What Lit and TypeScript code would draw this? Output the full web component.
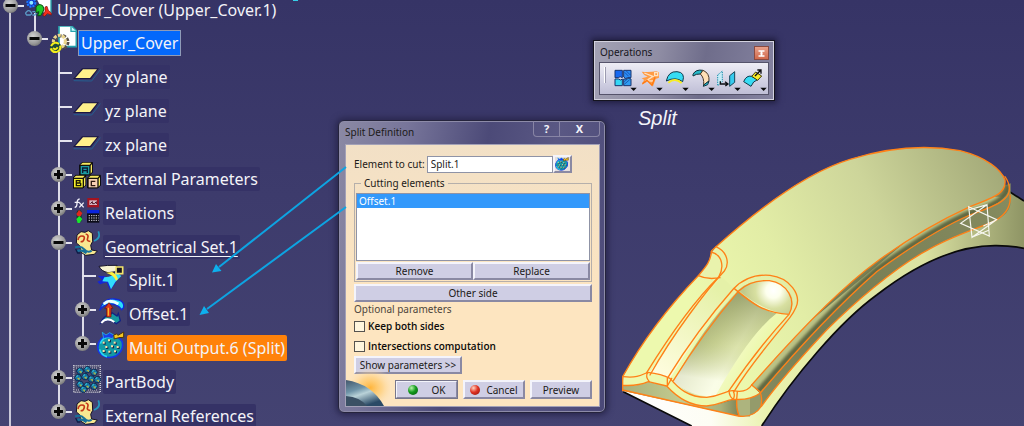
import { LitElement, html, css, svg, nothing, TemplateResult } from "lit";
import { customElement, property } from "lit/decorators.js";

const icon = (body: unknown, box = "0 0 84 84", cls = "glyph") =>
  html`<svg class=${cls} viewBox=${box} aria-hidden="true">${body}</svg>`;

/* ---- tree glyphs, drawn on an 84 x 84 grid ---- */
const productGlyph = icon(svg`
  <path d="M26 0h52v62H58" fill="#fff" stroke="#2aa7ad" stroke-width="4"/>
  <circle cx="19" cy="29" r="12" fill="#0a35c8" stroke="#1e7bff" stroke-width="6" stroke-dasharray="6 3"/>
  <circle cx="19" cy="29" r="6" fill="#8fe9ff"/>
  <path d="M5 56q6-6 12 0t-1 10H5q-6-5 0-10zM22 56h8q6 5 0 10h-8" fill="none" stroke="#5b9cc8" stroke-width="4"/>
  <path d="M33 42q8-12 20-4q8 10 0 20l-6 10h-9l4-12-9 3z" fill="#1fc728" stroke="#0a4f12" stroke-width="3"/>
  <path d="M60 42l6-2 4 12 9 8v6l-12-4-8 8-6-3 7-12z" fill="#f5301c" stroke="#7c0d0d" stroke-width="2"/>`);

const partGlyph = icon(svg`
  <path d="M30 0h38l14 14v48H30z" fill="#fff" stroke="#26a2ad" stroke-width="5"/>
  <path d="M66 2v14h16" fill="#c9fbff" stroke="#26a2ad" stroke-width="4"/>
  <circle cx="38" cy="48" r="19" fill="none" stroke="#595047" stroke-width="9" stroke-dasharray="9 4"/>
  <circle cx="31" cy="46" r="18" fill="none" stroke="#ead58a" stroke-width="9" stroke-dasharray="9 4"/>
  <circle cx="20" cy="64" r="17" fill="#1d4b3d"/>
  <path d="M6 60q10-16 24-6M5 67q6 15 20 10q12-5 8-18M12 66q8 8 14-2" fill="none" stroke="#f4ee1b" stroke-width="6"/>`);

const planeGlyph = icon(svg`
  <path d="M2 62l54 1 26-34" fill="none" stroke="#255f91" stroke-width="3"/>
  <path d="M0 57L27 25h51L54 57z" fill="#1a1741"/>
  <path d="M7 54L30 28h42L51 54z" fill="#fff08b"/>`);

const cube = (x: number, y: number, fill: string, letter: string) => svg`
  <path d="M${x} ${y + 8}l8-8h30v30l-8 8h-30z" fill="#15130c" stroke="#080808" stroke-width="3"/>
  <path d="M${x + 2} ${y + 7}l7-6h26l-5 6zM${x + 33} ${y + 10}l4-5v24l-4 5z" fill="#f6e85f"/>
  <rect x=${x + 3} y=${y + 11} width="26" height="25" fill=${fill}/>
  ${letter === "A" ? svg`<path d="M${x + 9} ${y + 32}v-15h14v15m-14-7h14" fill="none" stroke="#0c1b33" stroke-width="4"/>` : nothing}
  ${letter === "B" ? svg`<path d="M${x + 10} ${y + 16}h11v7h-11zh0v15h13v-8" fill="none" stroke="#1b1a05" stroke-width="4"/>` : nothing}
  ${letter === "C" ? svg`<path d="M${x + 23} ${y + 18}h-12v13h12" fill="none" stroke="#2c1811" stroke-width="4"/>` : nothing}`;

const paramsGlyph = icon(svg`${cube(20, 1, "#1b9aa2", "A")}${cube(0, 40, "#f4ee2a", "B")}${cube(44, 40, "#f9d1b4", "C")}`);

const relationsGlyph = icon(svg`
  <path d="M5 34q7 0 7-12t8-13M5 19h14M19 20l13 14M32 20L19 34" fill="none" stroke="#f1f0f8" stroke-width="4"/>
  <rect x="43" y="6" width="35" height="28" fill="#a31420"/>
  <path d="M49 13h23v14H49z" fill="#d8b9c5"/><path d="M52 23l6-6v6h6l6-6v7" fill="none" stroke="#4b1220" stroke-width="3"/>
  <rect x="11" y="43" width="15" height="36" rx="6" fill="#17372f"/>
  <path d="M10 54l8-12 10 9-5 10h-9z" fill="#e0261d"/><path d="M10 69l9-9 9 9-8 12h-6z" fill="#19e92c"/>
  <rect x="42" y="42" width="37" height="38" fill="#0b0b18"/><rect x="42" y="42" width="37" height="10" fill="#0a24dc"/>
  <path d="M47 59h30M47 66h30M47 73h30" stroke="#d8d6e3" stroke-width="3" stroke-dasharray="4 3"/>`);

const setGlyph = icon(svg`
  <path d="M12 15L24 5l12 2 10-5 12 8 1 24-6 12 3 14 17 3-9 10-26 3-14-9-4-20-10-8z" fill="#f8e891" stroke="#171327" stroke-width="3"/>
  <path d="M15 30q2-12 12-12t6 10-10 6M38 12q10 2 6 12t8 10" fill="none" stroke="#c43719" stroke-width="5"/>
  <path d="M6 52q18-6 28 6t22 4M12 64q14-8 28 6" fill="none" stroke="#17719a" stroke-width="6"/>
  <path d="M76 4q7 18-6 25l-7 4" fill="none" stroke="#249abf" stroke-width="5"/>
  <path d="M8 57l6 12h8" fill="none" stroke="#0d1e48" stroke-width="4"/>`);

const splitGlyph = icon(svg`
  <path d="M2 38l20 1 8 4 34-6-10 26-15 19-10-24-20 6-8-8 14-6z" fill="#1426d8"/>
  <path d="M22 43q28-2 35-16l16 12-18 18-13 22-9-23-17-1z" fill="#31ddfb"/>
  <path d="M6 10q24-4 54-3l-3 19-24 3q-20-4-27-19z" fill="#f6f2cf" stroke="#151228" stroke-width="3"/>
  <path d="M27 29q24 8 30 24l6-5q-6-17-18-21z" fill="#fff33d"/>
  <path d="M57 12h20v20H57z" fill="#171421" stroke="#f3e56a" stroke-width="5"/>`);

const offsetGlyph = icon(svg`
  <path d="M8 40Q18 2 52 6t27 27l-5 5q-14-18-34-17T8 40z" fill="#2bdcfb" stroke="#102ad6" stroke-width="4"/>
  <path d="M20 21q18-16 44 0" fill="none" stroke="#eaffff" stroke-width="9"/>
  <path d="M12 77q10-24 27-22l6-8 15 10 4-8 6 22-12 9-14-8q-18-5-32 5z" fill="#17989f" stroke="#122284" stroke-width="4"/>
  <path d="M13 78q16-20 39-3" fill="none" stroke="#fff" stroke-width="6"/>
  <path d="M29 60V34h-6l13-17 12 17h-6v26z" fill="#de361c" stroke="#6f1308" stroke-width="2"/><path d="M34 56V32" stroke="#f8b829" stroke-width="4"/>`);

const multiBody = svg`
  <path d="M14 22q-20 22-6 44 22 22 50 8 25-18 17-43-14-20-40-14z" fill="#139aa5" stroke="#1537e6" stroke-width="5"/>
  <path d="M10 38q6-16 18-18M8 55q4 17 22 22" fill="none" stroke="#25d9f6" stroke-width="5"/>
  <path d="M16 4l11 8 11-7 14 8-6 10q-14-7-26 0z" fill="#1a3ce8" stroke="#24d1f2" stroke-width="2"/>
  <path d="M50 12l9-3 4 4 17-10v16l-15 1-13 4z" fill="#f4c624" stroke="#493509" stroke-width="3"/>
  ${[[22, 36], [38, 29], [55, 36], [30, 49], [47, 47], [64, 49], [22, 61], [39, 63], [56, 62]].map(([x, y]) => svg`
    <path d="M${x - 3} ${y - 2}h7v7h-7z" fill="#14294d"/><path d="M${x - 5} ${y - 4}h6v6h-6z" fill="#ffe0a4"/>`)}`;
const multiGlyph = icon(multiBody);

const bodyGlyph = icon(svg`
  <rect x="1" y="1" width="82" height="82" fill="#48476b"/>
  <rect x="2" y="2" width="80" height="80" fill="none" stroke="#cccbd6" stroke-width="5" stroke-dasharray="3 3"/>
  <path d="M9 9h66M9 75h66" stroke="#cccbd6" stroke-width="3" stroke-dasharray="3 3"/>
  ${[[20, 18], [42, 14], [62, 22], [14, 38], [35, 35], [54, 42], [72, 44], [20, 58], [41, 62], [62, 64], [30, 73]].map(([x, y]) => svg`
    <path d="M${x - 10} ${y}l7-9h10l5 9-6 9H${x - 4}z" fill="#1a6f9c" stroke="#102c55" stroke-width="3"/>
    <path d="M${x - 4} ${y - 2}l5-5M${x + 2} ${y + 5}l5-5" stroke="#2bb7d1" stroke-width="4"/>
    <path d="M${x - 1} ${y + 2}h5v5" stroke="#c9b329" stroke-width="3" fill="none"/>`)}`);

interface Node {
  label: string;
  glyph: TemplateResult;
  toggle?: "plus" | "minus";
  look?: "bare" | "current" | "hot" | "underlined";
  children?: Node[];
}

const model: Node = {
  label: "Upper_Cover (Upper_Cover.1)", glyph: productGlyph, toggle: "minus", look: "bare",
  children: [{
    label: "Upper_Cover", glyph: partGlyph, toggle: "minus", look: "current",
    children: [
      { label: "xy plane", glyph: planeGlyph },
      { label: "yz plane", glyph: planeGlyph },
      { label: "zx plane", glyph: planeGlyph },
      { label: "External Parameters", glyph: paramsGlyph, toggle: "plus" },
      { label: "Relations", glyph: relationsGlyph, toggle: "plus" },
      {
        label: "Geometrical Set.1", glyph: setGlyph, toggle: "minus", look: "underlined",
        children: [
          { label: "Split.1", glyph: splitGlyph },
          { label: "Offset.1", glyph: offsetGlyph, toggle: "plus" },
          { label: "Multi Output.6 (Split)", glyph: multiGlyph, toggle: "plus", look: "hot" },
        ],
      },
      { label: "PartBody", glyph: bodyGlyph, toggle: "plus" },
      { label: "External References", glyph: setGlyph, toggle: "plus" },
    ],
  }],
};

@customElement("spec-tree")
export class SpecTree extends LitElement {
  @property({ attribute: false }) root: Node = model;

  static styles = css`
    :host {
      display: flow-root;
      min-height: 100vh;
      box-sizing: border-box;
      background: linear-gradient(#c9c8d8, #c9c8d8) 9px 6px / 2px 100% no-repeat;
      font: 16px/24px "Noto Sans", "Open Sans", sans-serif;
      color: #f3f3f8;
    }
    ul { list-style: none; margin: 0; padding: 0 0 0 24px; display: grid; gap: 1px; }
    .top { padding: 0; margin-top: -7px; }
    li { min-width: 0; }
    .branch { background: linear-gradient(#dddce8, #dddce8) 34px 20px / 2px calc(100% - 40px) no-repeat; }
    .top > .branch { background-size: 2px 24px; }
    .d1 > ul { padding-top: 1px; }
    .row { display: flex; align-items: center; height: 33px; white-space: nowrap; }
    .arm { flex: none; width: 25px; height: 16px; margin-bottom: 8px; display: flex; align-items: center;
      background: linear-gradient(#e4e3ee, #e4e3ee) 10px 7px / 14px 2px no-repeat; }
    .knob { margin: 0 0 0 3px; padding: 0; width: 15px; height: 15px; border: 0; border-radius: 50%;
      background: radial-gradient(circle at 40% 35%, #d2d2d2, #9a9a9a 55%, #555); display: grid; }
    .knob svg { width: 15px; height: 15px; }
    .glyph { flex: none; width: 28px; height: 28px; margin-bottom: 6px; }
    .label { margin-left: 2px; padding: 0 2px; border-radius: 2px; background: #353266; }
    .bare { background: none; }
    .current { background: #0468fb; outline: 1px solid #8f9bb8; border-radius: 0; }
    .hot { background: #ff820a; line-height: 26px; }
    .underlined { text-decoration: underline; text-decoration-thickness: 1px; text-underline-offset: 3px; }
  `;

  private item(n: Node, depth: number): TemplateResult {
    return html`<li role="treeitem" class=${n.children ? `branch d${depth}` : "leaf"}>
      <div class="row">
        <span class="arm">${n.toggle ? html`
          <button class="knob" aria-label=${(n.toggle === "plus" ? "Expand " : "Collapse ") + n.label}>
            <svg viewBox="0 0 15 15"><path d=${n.toggle === "plus" ? "M3 7.5h9M7.5 3v9" : "M2.500 7.500h10"} stroke="#080808" stroke-width="3"/></svg>
          </button>` : nothing}</span>
        ${n.glyph}<span class="label ${n.look ?? ""}">${n.label}</span>
      </div>
      ${n.children ? html`<ul role="group">${n.children.map((c) => this.item(c, depth + 1))}</ul>` : nothing}
    </li>`;
  }

  render() {
    return html`<ul class="top" role="tree">${this.item(this.root, 0)}</ul>`;
  }
}

@customElement("split-dialog")
export class SplitDialog extends LitElement {
  static styles = css`
    :host { display: block; box-sizing: border-box; width: 268px; padding: 0 5px 5px 6px; border: 1px solid #25243c; border-radius: 6px;
      background: linear-gradient(100deg, #8b89a4 0, #77759a 22%, #4c4a78 48%, #5a5884 70%, #4a4877 100%);
      box-shadow: inset 0 0 0 1px #8d8ba8, 0 0 6px 2px #28264c;
      font: 10px/14px "Noto Sans", "Open Sans", sans-serif; color: #1c1a18; }
    header { display: flex; justify-content: space-between; height: 23px; }
    h2 { margin: 4px 0 0; font-size: 10px; line-height: 14px; font-weight: 400; }
    .caps { display: flex; height: 16px; border: 1px solid #8885a5; border-top: 0; border-radius: 0 0 4px 4px; box-sizing: border-box; }
    .caps button { border: 0; padding: 0; background: none; color: #f4f4fa; font: 700 11px/14px "Noto Sans", sans-serif; width: 25px; }
    .caps .close { width: 40px; border-left: 1px solid #8885a5; }
    form { position: relative; display: flex; flex-direction: column; border: 1px solid #a3a1b7; background: linear-gradient(#f2e0c6, #fde5c0 60%);
      padding: 10px 7px 7px 8px; overflow: hidden; }
    .cut { display: flex; align-items: center; height: 18px; }
    .cut input { flex: none; width: 126px; height: 17px; box-sizing: border-box; margin-left: 2px; padding: 0 3px; border: 1px solid #8f93a6; background: #fff; font: inherit; color: inherit; }
    button.push { font: inherit; color: inherit; padding: 0; height: 18px; box-sizing: border-box; background: #cfcee4;
      border: 2px solid; border-color: #f4f4fb #8a89a3 #8a89a3 #f4f4fb; border-radius: 0; white-space: nowrap; }
    .cut .push { width: 19px; display: grid; place-items: center; background: #e6e0de; }
    .mini { width: 14px; height: 14px; }
    fieldset { margin: 3px 0 2px; padding: 3px 1px 1px; border: 1px solid #b5afab; min-width: 0; }
    legend { margin-left: 5px; padding: 0 3px; line-height: 14px; }
    select { display: block; width: 100%; height: 68px; box-sizing: border-box; margin: 0 0 1px; padding: 0; border: 1px solid #8f93a6; border-radius: 0; background: #fff; font: inherit; overflow: hidden; outline: 0; }
    option { padding: 0 2px; min-height: 13px; line-height: 13px; }
    option:checked { background: #3399fb linear-gradient(#3399fb, #3399fb); -webkit-text-fill-color: #fff; }
    .pair { display: grid; grid-template-columns: 1fr 1fr; }
    p { margin: 0; line-height: 14px; color: #4d463c; }
    .tick { display: flex; align-items: center; gap: 3px; height: 20px; font-family: "Open Sans", "Noto Sans", sans-serif; font-weight: 600; line-height: 14px; color: #0c0b0a; }
    .tick input { appearance: none; margin: 0; width: 11px; height: 11px; box-sizing: border-box; border: 1px solid #55534f; background: #fff6de; }
    .more { align-self: flex-start; width: 108px; }
    footer { display: grid; grid-template-columns: 63px 62px 62px; gap: 5px; justify-content: end; margin-top: 6px; }
    footer .push { display: flex; align-items: center; justify-content: center; gap: 14px; height: 19px; }
    footer .stop { gap: 6px; }
    .main { outline: 1px solid #77768c; outline-offset: -1px; }
    .dot { width: 10px; height: 10px; border-radius: 50%; background: radial-gradient(circle at 35% 30%, #b8f7a9, #139a1c 45%, #06560c); }
    .stop .dot { background: radial-gradient(circle at 35% 30%, #ffd5c3, #e03222 45%, #8c0f0a); }
    .planet { position: absolute; left: 0; bottom: 0; width: 44px; height: 38px; }
  `;

  render() {
    return html`
      <header>
        <h2>Split Definition</h2>
        <div class="caps"><button aria-label="Help">?</button><button class="close" aria-label="Close">X</button></div>
      </header>
      <form @submit=${(e: Event) => e.preventDefault()}>
        <svg class="planet" viewBox="0 0 44 38" aria-hidden="true">
          <defs>
            <radialGradient id="glow" cx="55%" cy="52%" r="55%"><stop offset="0" stop-color="#ffb53a"/><stop offset=".5" stop-color="#ffce78" stop-opacity=".7"/><stop offset="1" stop-color="#fde5c0" stop-opacity="0"/></radialGradient>
            <linearGradient id="globe" x1="0" y1="0" x2=".5" y2="1"><stop offset="0" stop-color="#42566b"/><stop offset=".4" stop-color="#6f94a8"/><stop offset=".6" stop-color="#b9d2d8"/><stop offset="1" stop-color="#2b4a66"/></linearGradient>
          </defs>
          <rect width="44" height="38" fill="url(#glow)"/>
          <path d="M0 12Q26 16 38 38H0z" fill="url(#globe)"/><path d="M0 28q14 1 21 10H0z" fill="#3a5064"/>
        </svg>
        <div class="cut">
          <label for="element">Element to cut:</label><input id="element" type="text" value="Split.1">
          <button class="push" type="button" aria-label="Multiple selection">${icon(multiBody, "0 0 84 84", "mini")}</button>
        </div>
        <fieldset>
          <legend>Cutting elements</legend>
          <select size="5" aria-label="Cutting elements"><option selected>Offset.1</option></select>
          <div class="pair"><button class="push" type="button">Remove</button><button class="push" type="button">Replace</button></div>
        </fieldset>
        <button class="push" type="button">Other side</button>
        <p>Optional parameters</p>
        <label class="tick"><input type="checkbox">Keep both sides</label>
        <label class="tick"><input type="checkbox">Intersections computation</label>
        <button class="push more" type="button">Show parameters &gt;&gt;</button>
        <footer>
          <button class="push main"><span class="dot"></span>OK</button>
          <button class="push stop" type="button"><span class="dot"></span>Cancel</button>
          <button class="push" type="button">Preview</button>
        </footer>
      </form>`;
  }
}

/* ---- toolbar glyphs, drawn on a 78 x 96 grid: each cell is one button ---- */
const tools: { name: string; art: unknown }[] = [
  { name: "Join", art: svg`
    <g stroke="#18356f" stroke-width="3"><path d="M12 22h22v22q-7-6-12 0H12z" fill="#1768f0"/><path d="M38 22h22v22H50q-6 6-12-2z" fill="#2b8cf5"/>
    <path d="M12 48h10q8 6 12 0v20H12z" fill="#35d7f5"/><path d="M38 48h10q6-6 12 0v20H38z" fill="#2e9cf2"/></g>
    <path d="M40 64l16-14M40 56l8-7M46 24l12 12M41 28l12 12" stroke="#123a90" stroke-width="2"/>` },
  { name: "Split", art: svg`
    <path d="M14 26q22 2 44-1l8 3v16l-10 4-8 22-14-16-19 11 6-15-7-4 18-5q-13-5-18-15z" fill="#ff9b45"/>
    <path d="M22 30l26 10-20 13 20 1M53 29h9v9h-9z" fill="none" stroke="#ffe2c1" stroke-width="4"/><path d="M16 62l14-10 15 15 9-24" fill="none" stroke="#ff7a12" stroke-width="4"/>` },
  { name: "Extract", art: svg`
    <path d="M10 54Q16 24 42 26t17 30Q38 40 10 54z" fill="#37dcf4" stroke="#123a4b" stroke-width="3"/><path d="M16 59q20-16 40 1" fill="none" stroke="#f8ee1f" stroke-width="6"/>` },
  { name: "Fillet", art: svg`
    <path d="M12 34Q20 18 42 22l-8 11q-12-1-22 6z" fill="#28b8c8" stroke="#10303b" stroke-width="3"/>
    <path d="M42 22q20 8 18 32L44 66q2-22-10-33z" fill="#ffe0b6" stroke="#4b3928" stroke-width="3"/><path d="M44 66l16-12-4 11-13 5z" fill="#2ac8df" stroke="#10303b" stroke-width="3"/>` },
  { name: "Translate", art: svg`
    <path d="M8 36l14-12v32L8 68z" fill="#c5ecf7" stroke="#1b8fac" stroke-width="3" stroke-dasharray="4 3"/><path d="M44 38l15-12v32L44 70z" fill="#37cbee" stroke="#16485c" stroke-width="3"/><path d="M16 55v8h22m-8-7l9 7-8 6" fill="none" stroke="#0d0d12" stroke-width="4"/>` },
  { name: "Extrapolate", art: svg`
    <path d="M8 56Q16 36 32 40l18 10q-14 4-20 20z" fill="#37dcf4" stroke="#123a4b" stroke-width="3"/><path d="M32 40l12-13 18 12-12 13z" fill="#f9ec29" stroke="#3e390c" stroke-width="3"/><path d="M42 39l17-17m-10-1h11v11" fill="none" stroke="#0d0d12" stroke-width="4"/>` },
];

@customElement("operations-bar")
export class OperationsBar extends LitElement {
  static styles = css`
    :host { display: block; box-sizing: border-box; width: 182px; padding: 4px 5px 5px 5px; border: 1px solid #15141f;
      background: linear-gradient(100deg, #a3a2b4, #8f8da4 35%, #6f6d8b 60%, #8583a0); box-shadow: inset 0 0 0 1px #d3d2df, 0 0 6px 2px #201e40;
      font: 10px/14px "Noto Sans", "Open Sans", sans-serif; color: #17161d; }
    header { display: flex; justify-content: space-between; align-items: center; height: 16px; padding: 0 0 1px 1px; }
    h2 { margin: 0 0 3px; font-size: 10px; font-weight: 400; }
    .close { width: 15px; height: 14px; padding: 0; border: 1px solid #8a4a40; background: linear-gradient(#e9a18b, #d0694b); display: grid; place-items: center; }
    .close svg { width: 9px; height: 9px; }
    .bar { display: flex; align-items: center; height: 33px; box-sizing: border-box; border: 1px solid #55536b; background: linear-gradient(#eeedf5, #d6d5e6 50%, #bfbed6); padding-left: 4px; }
    .grip { width: 2px; height: 16px; margin: 0 5px 8px 0; background: #fff; border-right: 1px solid #9c9bb0; box-sizing: border-box; }
    .tool { flex: none; width: 26px; height: 31px; padding: 0; border: 0; background: none; display: block; }
    .tool svg { display: block; width: 26px; height: 31px; }
  `;

  render() {
    return html`
      <header><h2>Operations</h2>
        <button class="close" aria-label="Close"><svg viewBox="0 0 9 9"><path d="M1.500 2h6M1.500 7h6M4.500 2v5" stroke="#fff" stroke-width="1.500"/><path d="M3.500 3.500h2v2h-2z" fill="#fff"/></svg></button>
      </header>
      <div class="bar"><span class="grip"></span>
        ${tools.map((t) => html`<button class="tool" aria-label=${t.name}>
          <svg viewBox="0 0 78 93">${t.art}<path d="M58 74h19l-9 10z" fill="#0a0a0c"/></svg></button>`)}
      </div>`;
  }
}

@customElement("model-view")
export class ModelView extends LitElement {
  static styles = css`
    :host { display: block; width: 414px; height: 296px; }
    svg { display: block; width: 100%; height: 100%; }
  `;

  render() {
    return html`<svg viewBox="0 0 1242 888" role="img" aria-label="Upper cover solid">
      <defs>
        <linearGradient id="base" x1="0" y1="0" x2="1" y2="0"><stop offset="0" stop-color="#fff"/><stop offset=".22" stop-color="#fdfdf4"/><stop offset=".36" stop-color="#eaf2ae"/><stop offset=".75" stop-color="#dbe2a2"/><stop offset="1" stop-color="#8f9565"/></linearGradient>
        <linearGradient id="top" gradientUnits="userSpaceOnUse" x1="260" y1="560" x2="1200" y2="110"><stop offset="0" stop-color="#edf9ae"/><stop offset=".28" stop-color="#e2eda6"/><stop offset=".6" stop-color="#cdd59a"/><stop offset="1" stop-color="#a0a676"/></linearGradient>
        <clipPath id="lipclip"><path d="M425 765C560 610 690 475 800 395C910 315 1010 262 1080 230C1140 205 1190 195 1185 150L1198 165Q1200 220 1080 255C1010 285 910 345 800 425C680 530 560 660 450 790z"/></clipPath>
        <filter id="soft" x="-5%" y="-5%" width="110%" height="110%"><feGaussianBlur stdDeviation="5"/></filter>
        <linearGradient id="wall" gradientUnits="userSpaceOnUse" x1="400" y1="800" x2="1200" y2="200"><stop offset="0" stop-color="#868d61"/><stop offset=".3" stop-color="#757b52"/><stop offset="1" stop-color="#858b5f"/></linearGradient>
        <linearGradient id="front" x1="0" y1="0" x2="1" y2="0"><stop offset="0" stop-color="#a9b07a"/><stop offset=".5" stop-color="#c3cb8f"/><stop offset=".85" stop-color="#a9b07a"/><stop offset="1" stop-color="#7e8558"/></linearGradient>
        <linearGradient id="slot" gradientUnits="userSpaceOnUse" x1="275" y1="600" x2="430" y2="690"><stop offset="0" stop-color="#b9c184"/><stop offset=".3" stop-color="#d3dc9b"/><stop offset=".65" stop-color="#f3fac4"/><stop offset="1" stop-color="#ecf8ad"/></linearGradient>
        <linearGradient id="shade" gradientUnits="userSpaceOnUse" x1="410" y1="490" x2="370" y2="760"><stop offset="0" stop-color="#7f8659" stop-opacity=".65"/><stop offset=".6" stop-color="#a5ad75" stop-opacity=".3"/><stop offset="1" stop-color="#fff" stop-opacity=".6"/></linearGradient>
        <linearGradient id="strip" gradientUnits="userSpaceOnUse" x1="330" y1="480" x2="140" y2="740"><stop offset="0" stop-color="#e5f1a8"/><stop offset="1" stop-color="#fffde0"/></linearGradient>
        <radialGradient id="spot" gradientUnits="userSpaceOnUse" cx="490" cy="482" r="90"><stop offset="0" stop-color="#fff"/><stop offset=".25" stop-color="#fdffed"/><stop offset=".6" stop-color="#d7dfa0"/><stop offset="1" stop-color="#c0c98c"/></radialGradient>
      </defs>
      <path d="M40 785L245 888H455C550 740 690 575 800 495C910 410 1030 345 1160 347Q1205 347 1242 355V213L1200 186L900 300L400 700L60 760z" fill="url(#base)"/>
      <path d="M40 785L245 888M455 888C550 740 690 575 800 495C910 410 1030 345 1160 347Q1205 347 1242 355M1242 213L1200 186" fill="none" stroke="#0a0a0a" stroke-width="5"/>
      <path d="M38 768V782L385 858Q430 865 455 828C500 765 570 685 650 600C720 530 850 415 950 362C1020 320 1090 300 1150 275Q1202 252 1202 215V160L900 280L400 740z" fill="url(#wall)"/>
      <path d="M38 765L38 782L385 858L380 808Q340 820 300 828L170 768L115 755z" fill="url(#front)"/>
      <path d="M385 858Q430 865 455 828L450 788Q420 808 380 808z" fill="#949b6b"/>
      <path d="M385 858Q380 830 380 808L420 800V860z" fill="#adb47e"/>
      <path d="M40 738C100 628 180 525 265 437C288 410 302 395 303 370L318 350C430 250 580 130 720 88C850 48 960 46 1050 62C1130 82 1175 120 1185 150C1190 195 1140 205 1080 230C1010 262 910 315 800 395C690 475 560 610 425 765L450 790Q410 815 370 808C350 812 320 828 285 828C235 825 200 800 170 768L115 755Q80 770 38 768z" fill="url(#top)"/>
      <g clip-path="url(#lipclip)">
        <path d="M400 740L1050 200H1242V300L450 850z" fill="#bcc486"/>
        <path d="M443 788C560 650 680 522 800 419C910 339 1010 279 1080 249C1150 228 1195 205 1194 165" fill="none" stroke="#5f6640" stroke-width="18" filter="url(#soft)"/>
      </g>
      <path d="M120 727Q210 580 335 440L372 475Q270 600 180 745z" fill="url(#strip)"/>
      <path d="M303 366Q345 385 330 443Q290 450 265 437Q300 405 303 366z" fill="#e9f3ad"/>
      <path d="M385 480Q420 447 478 452C540 463 565 505 537 553Q465 640 360 782Q290 825 230 785L190 755Q280 590 385 480z" fill="url(#slot)"/>
      <path d="M385 485Q470 550 500 550Q420 610 315 800Q240 800 190 755Q280 590 385 485z" fill="url(#shade)"/>
      <path d="M385 480Q420 447 478 452C540 463 565 505 537 553Q460 545 385 480z" fill="url(#spot)"/>
      <g fill="none" stroke="#ff8117" stroke-width="4" stroke-linecap="round" stroke-linejoin="round">
        <path d="M38 782V740C100 628 180 525 265 437C288 410 302 395 305 362L318 350C430 250 580 130 720 88C850 48 960 46 1050 62C1130 82 1175 120 1185 150C1190 195 1140 205 1080 230C1010 262 910 315 800 395C690 475 560 610 425 765"/>
        <path d="M1185 140Q1203 165 1196 190C1185 220 1130 235 1080 255C1010 285 910 345 800 425C680 530 560 660 450 790"/>
        <path d="M1200 195Q1206 245 1150 275C1090 300 1020 320 950 362C850 415 720 530 650 600C570 685 500 765 455 828Q430 865 385 858L38 780"/>
        <path d="M40 740C80 745 95 735 113 727Q155 732 180 745C205 775 235 802 290 802C335 798 350 780 370 782Q410 790 425 765"/>
        <path d="M38 766Q82 769 115 755L170 768C210 812 250 828 290 828C335 823 345 810 370 808Q420 812 450 790"/>
        <path d="M318 350C352 365 360 400 343 423C290 480 190 610 120 735"/>
        <path d="M303 366C340 375 342 415 326 441C250 515 180 615 110 728M265 437Q292 450 330 443"/>
        <path d="M185 745L172 768L172 745C240 635 310 545 370 477C400 445 440 433 480 436C540 443 575 495 558 532Q550 550 540 562C470 650 420 705 372 785"/>
        <path d="M190 752C250 655 320 560 385 484C415 455 445 450 478 452C533 460 560 510 537 553C480 615 420 690 357 782M372 475C420 515 460 550 537 553"/>
        <path d="M113 727Q105 740 118 755M357 782Q358 800 370 808M370 785Q376 795 370 808M382 785L380 808M425 765L450 785Q458 805 453 828M380 812Q378 835 387 858"/>
      </g>
      <g fill="none" stroke="#f6f6ee" stroke-width="3.500"><path d="M1076 230L1160 269L1086 322zM1131 224L1138 318L1052 280zM1076 240L1131 224M1086 322L1138 300M1120 288l40-19"/></g>
    </svg>`;
  }
}

@customElement("app-root")
export class AppRoot extends LitElement {
  static styles = css`
    :host { display: block; position: relative; min-height: 100vh; overflow: hidden; background: linear-gradient(#363466, #3d3b6c 45%, #444372); }
    spec-tree { max-width: 320px; }
    .scene { position: absolute; left: 610px; top: 130px; }
    .dialog { position: absolute; left: 338px; top: 120px; }
    .tools { position: absolute; left: 593px; top: 40px; }
    .caption { position: absolute; left: 638px; top: 106px; margin: 0; font: italic 20px/24px "Liberation Sans", Arial, sans-serif; color: #f4f4fa; }
    .arrows { position: absolute; left: 190px; top: 0; width: 160px; height: 330px; pointer-events: none; }
  `;

  render() {
    return html`
      <spec-tree></spec-tree>
      <model-view class="scene"></model-view>
      <operations-bar class="tools"></operations-bar>
      <p class="caption">Split</p>
      <split-dialog class="dialog"></split-dialog>
      <svg class="arrows" viewBox="190 0 160 330" aria-hidden="true">
        <g stroke="#0da4e2" stroke-width="2"><path d="M346 167L219 267M346 207L207 309"/></g>
        <path d="M212 272.500L216 264L221.500 271zM199.500 315L204 306L209 313z" fill="#0db0ee"/>
        <path d="M293 0h5" stroke="#36cfe8" stroke-width="2"/>
      </svg>`;
  }
}
